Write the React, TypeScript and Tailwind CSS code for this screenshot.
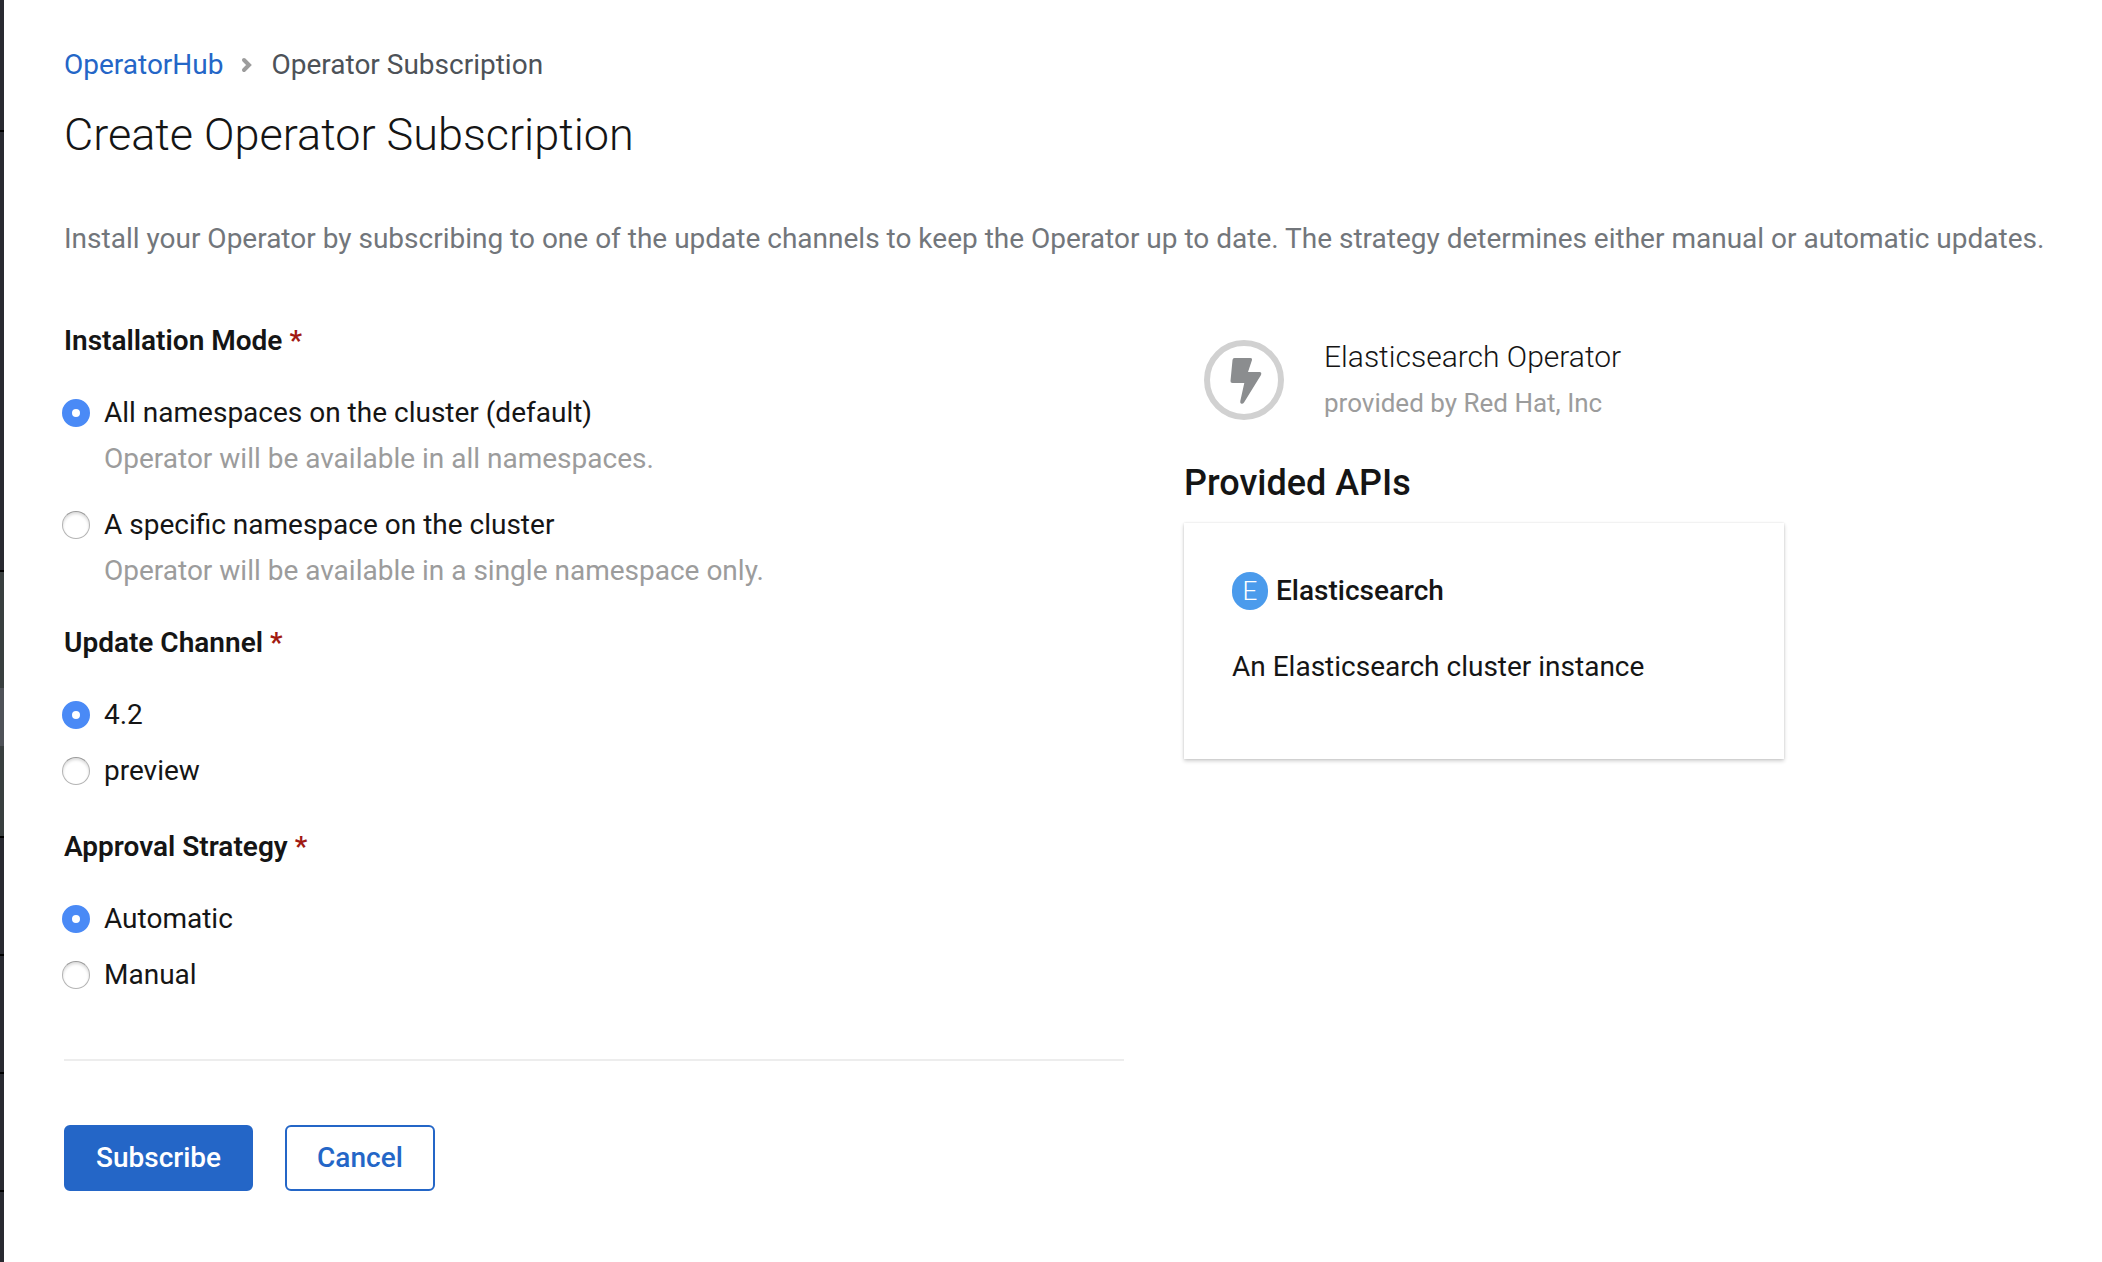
import type { ReactNode } from 'react';

function NavEdge() {
  return (
    <aside aria-hidden="true" className="flex w-1 shrink-0 flex-col bg-[#292a31]">
      <div className="h-[132px] border-b-2 border-black" />
      <div className="h-[440px] border-b-2 border-black" />
      <div className="flex h-[266px] flex-col border-b-2 border-black bg-[#393f3f] pt-[116px]">
        <div className="h-[58px] bg-[#4f5258]" />
      </div>
      <div className="h-[118px] border-b-2 border-black" />
      <div className="h-[118px] border-b-2 border-black" />
      <div className="h-[118px] border-b-2 border-black" />
    </aside>
  );
}

type RadioProps = { name: string; label: string; help?: string; checked?: boolean };

function Radio({ name, label, help, checked }: RadioProps) {
  return (
    <div>
      <label className="-ml-0.5 flex items-center gap-3.5 leading-10">
        <input
          type="radio"
          name={name}
          defaultChecked={checked}
          className="size-7 shrink-0 appearance-none rounded-full border border-[#b4b4b4] border-t-[#9a9a9a] bg-white shadow-[inset_0_2px_3px_rgba(0,0,0,0.14)] checked:border-[10px] checked:border-[#4a8af6] checked:shadow-none"
        />
        {label}
      </label>
      {help && <p className="mt-1.5 ml-10 leading-10 text-[#9c9c9c]">{help}</p>}
    </div>
  );
}

function Field({ title, className, children }: { title: string; className: string; children: ReactNode }) {
  return (
    <fieldset>
      <legend className="leading-10 font-semibold">
        {title} <span className="text-[#a11a12]">*</span>
      </legend>
      <div className={className}>{children}</div>
    </fieldset>
  );
}

export default function App() {
  return (
    <div className="flex min-h-screen bg-white font-[Roboto,sans-serif] text-[28px] text-[#151515]">
      <NavEdge />
      <main className="min-w-0 grow pt-[45px] pr-12 pb-16 pl-[60px]">
        <nav aria-label="Breadcrumb" className="flex items-center leading-10">
          <a href="#operatorhub" className="text-[#2466c7]">OperatorHub</a>
          <svg
            viewBox="0 0 12 18"
            className="mx-[18px] h-[18px] w-3"
            fill="none"
            stroke="#9c9c9c"
            strokeWidth="4"
            strokeLinecap="round"
          >
            <path d="M3 4l5 5-5 5" />
          </svg>
          <span className="text-[#4d5258]">Operator Subscription</span>
        </nav>
        <h1 className="mt-[22px] text-[45px] leading-14 font-light">Create Operator Subscription</h1>
        <p className="mt-14 leading-10 text-[#72767b]">
          Install your Operator by subscribing to one of the update channels to keep the Operator up to date. The
          strategy determines either manual or automatic updates.
        </p>

        <div className="mt-[62px] grid grid-cols-[106fr_87fr] gap-15">
          <form onSubmit={(e) => e.preventDefault()}>
            <div className="flex flex-col gap-8">
              <Field title="Installation Mode" className="mt-8 flex flex-col gap-[26px]">
                <Radio
                  name="mode"
                  label="All namespaces on the cluster (default)"
                  help="Operator will be available in all namespaces."
                  checked
                />
                <Radio
                  name="mode"
                  label="A specific namespace on the cluster"
                  help="Operator will be available in a single namespace only."
                />
              </Field>
              <Field title="Update Channel" className="mt-8 flex flex-col gap-4 pb-1">
                <Radio name="channel" label="4.2" checked />
                <Radio name="channel" label="preview" />
              </Field>
              <Field title="Approval Strategy" className="mt-8 flex flex-col gap-4">
                <Radio name="approval" label="Automatic" checked />
                <Radio name="approval" label="Manual" />
              </Field>
            </div>
            <hr className="mt-16 border-t-2 border-[#ededed]" />
            <div className="mt-16 flex gap-8">
              <button type="submit" className="rounded-md border-2 border-[#2466c7] bg-[#2466c7] px-[30px] py-[11px] leading-10 font-medium text-white">
                Subscribe
              </button>
              <button type="button" className="rounded-md border-2 border-[#2466c7] bg-white px-[30px] py-[11px] leading-10 font-medium text-[#2466c7]">
                Cancel
              </button>
            </div>
          </form>

          <section>
            <div className="flex items-center gap-10 pt-4 pl-5">
              <svg viewBox="0 0 80 80" className="size-20 shrink-0">
                <circle cx="40" cy="40" r="37" fill="none" stroke="#d1d1d1" strokeWidth="6" />
                <path
                  d="M30.500 18H46.500Q48.500 18 48 20L44 32H55.500Q58 32 57 35L40 62.500Q38.500 64.500 37 63.500Q36 63 36.300 61L40.300 43H28.500Q26.200 43 26.500 41L28.500 20Q28.700 18 30.500 18Z"
                  fill="#8b8d8f"
                />
              </svg>
              <div>
                <h2 className="text-[30px] leading-10 font-light">Elasticsearch Operator</h2>
                <p className="mt-1.5 text-[26px] leading-10 text-[#9c9c9c]">provided by Red Hat, Inc</p>
              </div>
            </div>
            <h2 className="mt-9 text-4xl leading-12 font-medium">Provided APIs</h2>
            <article className="mt-4 max-w-[600px] bg-white px-12 pt-12 pb-[72px] shadow-[0_2px_4px_rgba(3,3,3,0.2),0_0_2px_rgba(3,3,3,0.1)]">
              <h3 className="flex items-center gap-2 leading-10 font-medium">
                <span className="flex h-[38px] w-9 items-center justify-center rounded-full bg-[#4b9bec] text-[26px] font-light text-white">
                  E
                </span>
                Elasticsearch
              </h3>
              <p className="mt-9 leading-10">An Elasticsearch cluster instance</p>
            </article>
          </section>
        </div>
      </main>
    </div>
  );
}
